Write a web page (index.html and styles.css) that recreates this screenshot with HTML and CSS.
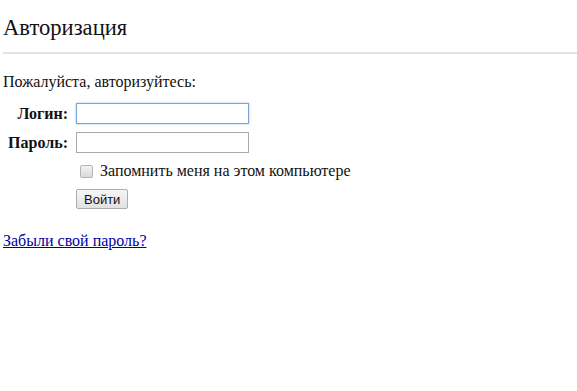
FILE: index.html
```html
<!DOCTYPE html>
<html lang="ru">
<head>
<meta charset="utf-8">
<title>Авторизация</title>
<link rel="stylesheet" href="styles.css">
</head>
<body>
<h1 class="title">Авторизация</h1>
<p class="intro">Пожалуйста, авторизуйтесь:</p>
<form class="login">
  <label class="label" for="login">Логин:</label>
  <input class="field field-focus" id="login" type="text">
  <label class="label" for="pass">Пароль:</label>
  <input class="field" id="pass" type="password">
  <span></span>
  <label class="remember"><span class="check"></span>Запомнить меня на этом компьютере</label>
  <span></span>
  <div><button class="btn" type="button">Войти</button></div>
</form>
<p class="forgot"><a href="#">Забыли свой пароль?</a></p>
</body>
</html>
```
FILE: styles.css
```css
html, body {
  margin: 0;
  padding: 0;
  background: #fff;
}
body {
  padding-left: 3px;
  font-family: "Liberation Serif", "Times New Roman", serif;
  font-size: 16px;
  color: #111;
}
.title {
  margin: 0;
  padding: 14px 0 10px;
  font-family: "Liberation Serif", "Times New Roman", serif;
  font-size: 22.6px;
  font-weight: normal;
  line-height: 28px;
  border-bottom: 2px solid #e2e2e2;
}
.intro {
  margin: 19px 0 0;
  line-height: 18px;
}
.login {
  display: grid;
  grid-template-columns: 65px 173px;
  column-gap: 8px;
  row-gap: 8px;
  align-items: center;
  margin-top: 12px;
}
.label {
  text-align: right;
  font-weight: bold;
  font-size: 16px;
}
.field {
  box-sizing: border-box;
  width: 173px;
  height: 21px;
  margin: 0;
  border: 1px solid #a9a9a9;
  background: #fff;
  padding: 1px 3px;
  outline: none;
}
.field-focus {
  border-color: #7ea4d4;
  box-shadow: 0 0 2px #9ec0e8;
}
.remember {
  display: flex;
  align-items: center;
  white-space: nowrap;
  line-height: 20px;
}
.check {
  flex: none;
  box-sizing: border-box;
  width: 13px;
  height: 13px;
  margin: 0 7px 0 4px;
  border: 1px solid #b5b5b5;
  border-radius: 2px;
  background: linear-gradient(#f4f4f4, #d9d9d9);
}
.btn {
  box-sizing: border-box;
  height: 20px;
  padding: 0 7px;
  font-family: "Liberation Sans", Arial, sans-serif;
  font-size: 13px;
  color: #111;
  background: linear-gradient(#f6f6f6, #e1e1e1);
  border: 1px solid #adadad;
  border-radius: 2px;
}
.forgot {
  margin: 23px 0 0;
  line-height: 18px;
}
.forgot a {
  color: #0000a8;
}
```
